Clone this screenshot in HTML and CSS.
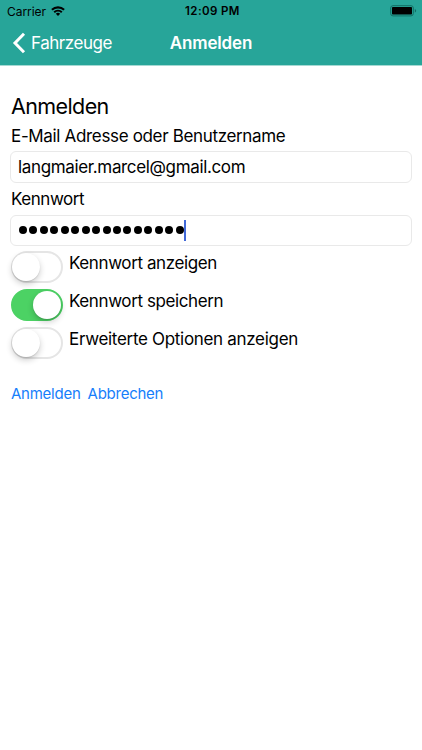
FILE: index.html
```html
<!DOCTYPE html>
<html lang="de">
<head>
<meta charset="utf-8">
<title>Anmelden</title>
<link rel="stylesheet" href="styles.css">
</head>
<body>
<header class="header">
  <div class="status">
    <div class="carrier"><span class="carrier-name">Carrier</span>
      <svg class="wifi" viewBox="0 0 14 10"><path d="M.2 3.1a9.8 9.8 0 0 1 13.6 0L12.4 4.6a7.8 7.8 0 0 0-10.8 0ZM2.5 5.5a6.5 6.5 0 0 1 9 0L10.1 7a4.5 4.5 0 0 0-6.2 0ZM4.8 7.8a3.2 3.2 0 0 1 4.4 0L7 10Z"/></svg>
    </div>
    <time class="clock">12:09 PM</time>
    <svg class="battery" viewBox="0 0 28 12"><rect x=".7" y=".7" width="22.6" height="10.2" rx="2.3" fill="none" stroke="#116e63"/><rect x="2" y="2" width="20" height="7.6" rx=".8"/><path d="M24.8 4v3.7q1.4-.6 1.4-1.85T24.8 4Z" fill="#116e63"/></svg>
  </div>
  <nav class="nav">
    <a class="back"><svg class="chevron" viewBox="0 0 14 22"><path d="M12 1.8 3 11l9 9.2" fill="none" stroke="#fff" stroke-width="3"/></svg><span class="back-label">Fahrzeuge</span></a>
    <span class="title">Anmelden</span>
    <span></span>
  </nav>
</header>
<main class="form">
  <h1 class="heading">Anmelden</h1>
  <label class="label">E-Mail Adresse oder Benutzername</label>
  <div class="field">langmaier.marcel@gmail.com</div>
  <label class="label label-password">Kennwort</label>
  <div class="field password"><i></i><i></i><i></i><i></i><i></i><i></i><i></i><i></i><i></i><i></i><i></i><i></i><i></i><i></i><i></i><i></i><b class="caret"></b></div>
  <div class="options">
    <div class="option"><span class="switch"></span><span class="option-label">Kennwort anzeigen</span></div>
    <div class="option"><span class="switch on"></span><span class="option-label">Kennwort speichern</span></div>
    <div class="option"><span class="switch"></span><span class="option-label option-more">Erweiterte Optionen anzeigen</span></div>
  </div>
  <div class="actions"><a>Anmelden</a><a>Abbrechen</a></div>
</main>
</body>
</html>
```
FILE: styles.css
```css
* { box-sizing: border-box; }
body { margin: 0; background: #fff; color: #000; font-family: Inter, "Liberation Sans", sans-serif; font-size: 17px; white-space: nowrap; }
.header { height: 66px; background: #27a599; border-bottom: 1px solid #a5d9d3; }
.status { display: grid; grid-template-columns: 1fr auto 1fr; align-items: center; height: 22px; padding: 0 4px 0 7px; font-size: 12px; }
.carrier { display: flex; align-items: center; gap: 5px; }
.carrier-name { letter-spacing: -.05px; }
.wifi { width: 14px; height: 10px; }
.clock { font-size: 11.5px; font-weight: 600; letter-spacing: .4px; }
.battery { width: 28px; height: 12px; justify-self: end; }
.nav { display: grid; grid-template-columns: 1fr auto 1fr; align-items: center; height: 42px; padding: 0 12px; color: #fff; }
.back { display: flex; align-items: center; gap: 5px; }
.back-label { letter-spacing: -.45px; }
.chevron { width: 14px; height: 22px; }
.title { font-weight: 600; letter-spacing: -.15px; }
.form { padding: 26px 10px 0 11px; }
.heading { margin: 0; height: 28px; line-height: 29px; font-size: 21.5px; font-weight: 400; letter-spacing: -.6px; }
.label { display: block; height: 31px; line-height: 32px; letter-spacing: -.34px; }
.field { display: flex; align-items: center; height: 32px; margin: 0 0 0 -1px; padding: 0 7px 1px; border: 1px solid #e9e9e9; border-radius: 6px; letter-spacing: -.35px; }
.label-password { height: 32px; line-height: 33px; letter-spacing: -.45px; }
.password { height: 31px; gap: 2.45px; padding: 0 8px 1px; }
.password i { width: 8px; height: 8px; border-radius: 50%; background: #000; }
.caret { width: 2px; height: 21px; margin-left: -2px; background: #4169d8; }
.options { display: grid; gap: 6px; padding-top: 5px; }
.option { display: flex; gap: 6px; height: 32px; }
.option-label { line-height: 24px; letter-spacing: -.4px; }
.option-more { letter-spacing: -.31px; }
.switch { display: flex; align-items: center; width: 52px; height: 32px; border: 2px solid #e5e5e5; border-radius: 16px; }
.switch::before { content: ""; width: 28px; height: 28px; margin-left: -1px; border-radius: 50%; background: #fff; box-shadow: 0 3px 6px rgba(0,0,0,.2), 0 1px 1px rgba(0,0,0,.1); }
.switch.on { justify-content: flex-end; background: #4cd264; border-color: #4cd264; }
.actions { display: flex; gap: 7px; margin-top: 25px; line-height: 20px; font-size: 15px; letter-spacing: -.25px; color: #167efb; }
```
